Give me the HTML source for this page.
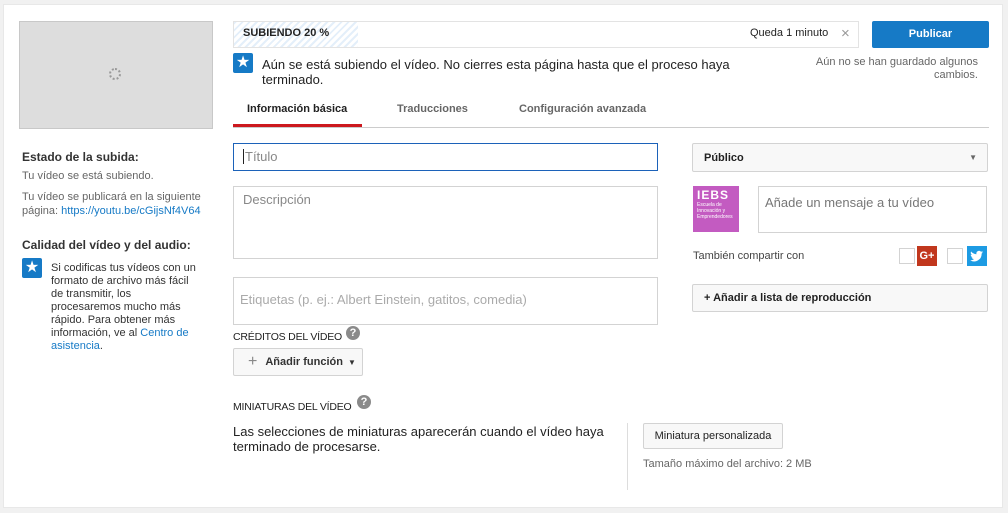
<!DOCTYPE html>
<html><head><meta charset="utf-8"><style>
*{box-sizing:border-box;margin:0;padding:0}
body{width:1008px;height:513px;background:#f1f1f1;font-family:"Liberation Sans",Arial,sans-serif;color:#222;position:relative;overflow:hidden}
.card{position:absolute;left:3px;top:4px;width:1000px;height:504px;background:#fff;border:1px solid #e8e8e8}
.a{position:absolute;white-space:nowrap}
.box{position:absolute;border:1px solid #d3d3d3;background:#fff}
.btn{position:absolute;border:1px solid #d3d3d3;background:#f8f8f8;border-radius:2px;font-size:11px;font-weight:bold;color:#333;display:flex;align-items:center}
.star{position:absolute;width:20px;height:20px;background:#167ac6;border-radius:2px;color:#fff;font-size:16px;line-height:20px;text-align:center}
.q{position:absolute;width:14px;height:14px;border-radius:50%;background:#8a8a8a;color:#fff;font-size:11px;font-weight:bold;line-height:14px;text-align:center}
.ph{color:#999;font-size:13px}
.blue{color:#167ac6}
</style></head><body>
<div class="card"></div>
<div class="a" style="left:19px;top:21px;width:194px;height:108px;background:#ddd;border:1px solid #c8c8c8"></div>
<div class="a" style="left:109px;top:68px;width:12px;height:12px;border:2px dotted #999;border-radius:50%"></div>

<div class="a" style="left:22px;top:150px;font-size:12px;font-weight:bold;color:#333">Estado de la subida:</div>
<div class="a" style="left:22px;top:170px;font-size:11px;color:#666">Tu vídeo se está subiendo.</div>
<div class="a" style="left:22px;top:190px;font-size:11px;color:#666;line-height:14px">Tu vídeo se publicará en la siguiente<br>página: <span class="blue">https://youtu.be/cGijsNf4V64</span></div>
<div class="a" style="left:22px;top:238px;font-size:12px;font-weight:bold;color:#333">Calidad del vídeo y del audio:</div>
<div class="star" style="left:22px;top:258px">★</div>
<div class="a" style="left:51px;top:262px;font-size:11px;color:#333;line-height:13px">Si codificas tus vídeos con un<br>formato de archivo más fácil<br>de transmitir, los<br>procesaremos mucho más<br>rápido. Para obtener más<br>información, ve al <span class="blue">Centro de</span><br><span class="blue">asistencia</span>.</div>

<div class="box" style="left:233px;top:21px;width:626px;height:27px;border-color:#e3e3e3"></div>
<div class="a" style="left:234px;top:22px;width:124px;height:25px;background:repeating-linear-gradient(135deg,#e4effa 0 2px,#fff 2px 5px)"></div>
<div class="a" style="left:243px;top:27px;font-size:11px;font-weight:bold;color:#222">SUBIENDO 20 %</div>
<div class="a" style="left:750px;top:27px;font-size:11px;color:#222">Queda 1 minuto</div>
<div class="a" style="left:841px;top:25px;font-size:15px;color:#999">×</div>
<div class="a" style="left:872px;top:21px;width:117px;height:27px;background:#167ac6;border-radius:2px;color:#fff;font-size:11px;font-weight:bold;text-align:center;line-height:27px">Publicar</div>
<div class="star" style="left:233px;top:53px">★</div>
<div class="a" style="left:262px;top:57px;font-size:13px;line-height:15px;color:#222">Aún se está subiendo el vídeo. No cierres esta página hasta que el proceso haya<br>terminado.</div>
<div class="a" style="left:800px;top:56px;width:178px;text-align:right;font-size:11px;line-height:13px;color:#666;white-space:normal">Aún no se han guardado algunos cambios.</div>

<div class="a" style="left:247px;top:103px;font-size:11px;font-weight:bold;color:#222">Información básica</div>
<div class="a" style="left:397px;top:103px;font-size:11px;font-weight:bold;color:#666">Traducciones</div>
<div class="a" style="left:519px;top:103px;font-size:11px;font-weight:bold;color:#666">Configuración avanzada</div>
<div class="a" style="left:233px;top:127px;width:756px;height:1px;background:#ccc"></div>
<div class="a" style="left:233px;top:124px;width:129px;height:3px;background:#cc181e"></div>

<div class="box" style="left:233px;top:143px;width:425px;height:28px;border-color:#1c62b9"></div>
<div class="a ph" style="left:243px;top:149px;color:#888"><span style="border-left:1px solid #222;margin-right:1px"></span>Título</div>
<div class="box" style="left:233px;top:186px;width:425px;height:73px"></div>
<div class="a ph" style="left:243px;top:192px;color:#888">Descripción</div>
<div class="box" style="left:233px;top:277px;width:425px;height:48px"></div>
<div class="a ph" style="left:240px;top:292px;color:#aaa">Etiquetas (p. ej.: Albert Einstein, gatitos, comedia)</div>

<div class="a" style="left:233px;top:331px;font-size:10.5px;color:#222;letter-spacing:-0.2px">CRÉDITOS DEL VÍDEO</div>
<div class="q" style="left:346px;top:326px">?</div>
<div class="btn" style="left:233px;top:348px;width:130px;height:28px;padding-left:14px"><span style="color:#888;font-size:16px;font-weight:normal;margin-right:8px">+</span>Añadir función <span style="font-size:8px;margin-left:5px">▼</span></div>

<div class="a" style="left:233px;top:401px;font-size:10.5px;color:#222;letter-spacing:-0.2px">MINIATURAS DEL VÍDEO</div>
<div class="q" style="left:357px;top:395px">?</div>
<div class="a" style="left:233px;top:424px;font-size:13px;line-height:15px;color:#222">Las selecciones de miniaturas aparecerán cuando el vídeo haya<br>terminado de procesarse.</div>
<div class="a" style="left:627px;top:423px;width:1px;height:67px;background:#ddd"></div>
<div class="btn" style="left:643px;top:423px;width:140px;height:26px;justify-content:center;font-weight:normal;color:#222">Miniatura personalizada</div>
<div class="a" style="left:643px;top:458px;font-size:11px;color:#666">Tamaño máximo del archivo: 2 MB</div>

<div class="btn" style="left:692px;top:143px;width:296px;height:29px;padding-left:11px;background:#f8f8f8;color:#222">Público<span style="position:absolute;right:10px;font-size:8px;color:#666">▼</span></div>
<div class="a" style="left:693px;top:186px;width:46px;height:46px;background:#c35bc1;color:#fff;font-size:5px;line-height:6px;padding:3px 4px">
<div style="font-size:12px;font-weight:bold;line-height:13px;letter-spacing:1px">IEBS</div>Escuela de<br>Innovación y<br>Emprendedores</div>
<div class="box" style="left:758px;top:186px;width:229px;height:47px"></div>
<div class="a" style="left:765px;top:195px;font-size:13px;color:#777">Añade un mensaje a tu vídeo</div>
<div class="a" style="left:693px;top:250px;font-size:11px;color:#444">También compartir con</div>
<div class="box" style="left:899px;top:248px;width:16px;height:16px"></div>
<div class="a" style="left:917px;top:246px;width:20px;height:20px;background:#c1371d;color:#fff;font-size:11px;font-weight:bold;line-height:20px;text-align:center">G+</div>
<div class="box" style="left:947px;top:248px;width:16px;height:16px"></div>
<div class="a" style="left:967px;top:246px;width:20px;height:20px;background:#1d9be3">
<svg width="20" height="20" viewBox="0 0 20 20"><path d="M16 6.2c-.5.2-1 .4-1.5.4.6-.3 1-.9 1.2-1.5-.5.3-1.1.5-1.7.7a2.6 2.6 0 0 0-4.5 2.4C7.3 8.1 5.400 7.100 4.100 5.500c-.7 1.200-.3 2.700.8 3.500-.4 0-.8-.1-1.200-.3 0 1.300.9 2.400 2.100 2.600-.4.1-.8.1-1.200 0 .3 1.100 1.300 1.800 2.400 1.800A5.300 5.300 0 0 1 3.200 14.200 7.400 7.400 0 0 0 14.600 7.600c.5-.4.900-.8 1.400-1.400z" fill="#fff"/></svg></div>
<div class="btn" style="left:692px;top:284px;width:296px;height:28px;padding-left:11px;color:#222">+ Añadir a lista de reproducción</div>
</body></html>
